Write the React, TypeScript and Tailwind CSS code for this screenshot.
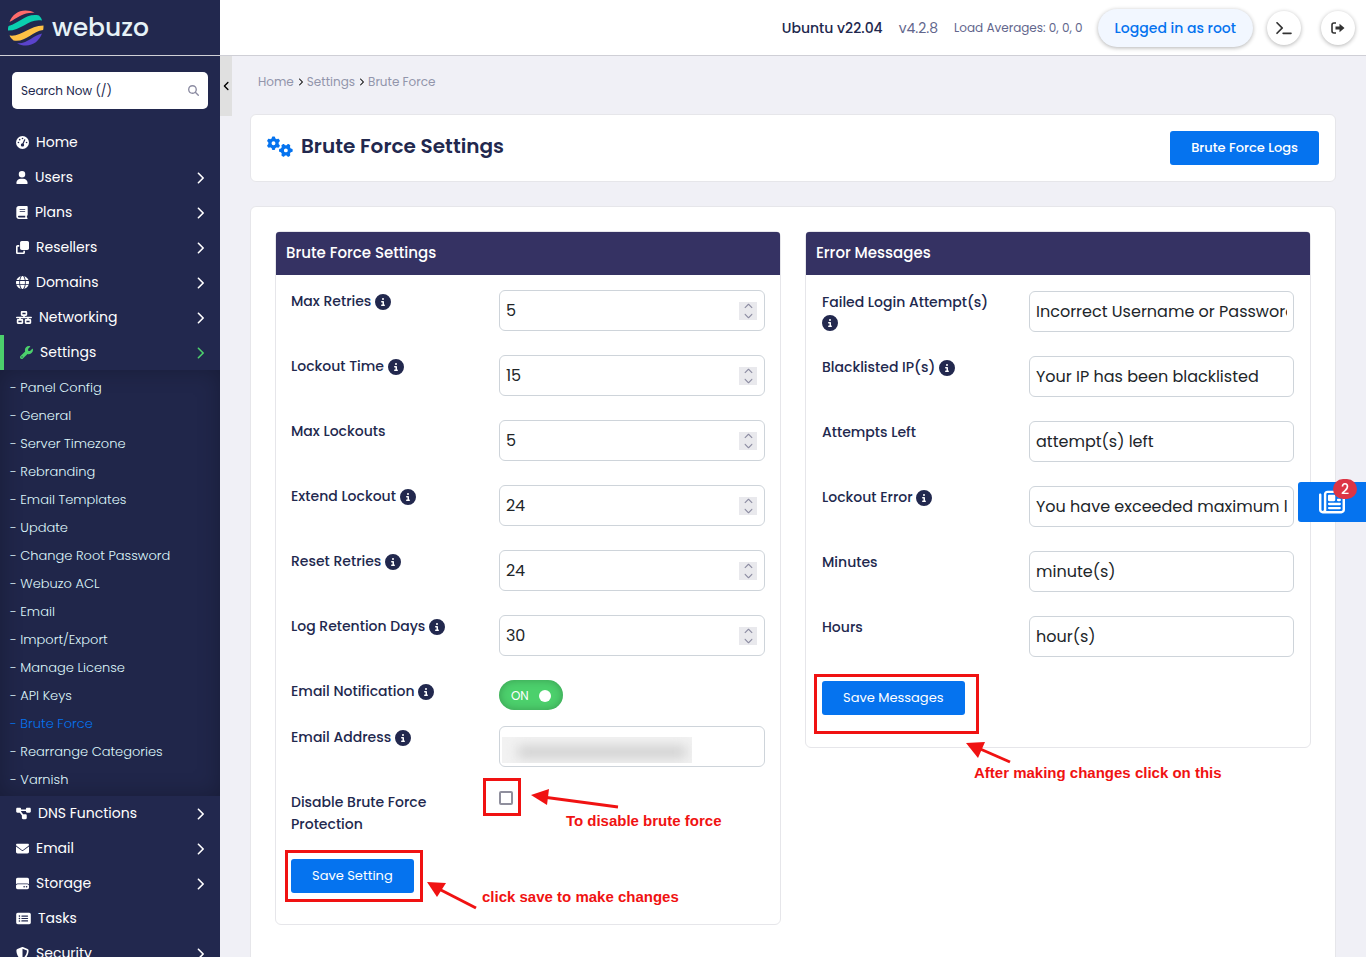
import React, { useState } from "react";
import {
  FaAngleLeft,
  FaBook,
  FaChevronDown,
  FaChevronRight,
  FaChevronUp,
  FaCircleInfo,
  FaClone,
  FaDiagramProject,
  FaEnvelope,
  FaGaugeHigh,
  FaGears,
  FaGlobe,
  FaHardDrive,
  FaMagnifyingGlass,
  FaNetworkWired,
  FaRectangleList,
  FaRegNewspaper,
  FaShieldHalved,
  FaTerminal,
  FaUser,
  FaWrench,
} from "react-icons/fa6";
import type { IconType } from "react-icons";

interface MenuItem {
  label: string;
  icon: IconType;
  iconWidth: string;
  expandable?: boolean;
  active?: boolean;
}

const topMenu: MenuItem[] = [
  { label: "Home", icon: FaGaugeHigh, iconWidth: "w-[13px]" },
  { label: "Users", icon: FaUser, iconWidth: "w-3", expandable: true },
  { label: "Plans", icon: FaBook, iconWidth: "w-3", expandable: true },
  {
    label: "Resellers",
    icon: FaClone,
    iconWidth: "w-[13px]",
    expandable: true,
  },
  { label: "Domains", icon: FaGlobe, iconWidth: "w-[13px]", expandable: true },
  {
    label: "Networking",
    icon: FaNetworkWired,
    iconWidth: "w-4",
    expandable: true,
  },
  {
    label: "Settings",
    icon: FaWrench,
    iconWidth: "w-[13px]",
    expandable: true,
    active: true,
  },
];

const bottomMenu: MenuItem[] = [
  {
    label: "DNS Functions",
    icon: FaDiagramProject,
    iconWidth: "w-[15px]",
    expandable: true,
  },
  { label: "Email", icon: FaEnvelope, iconWidth: "w-[13px]", expandable: true },
  {
    label: "Storage",
    icon: FaHardDrive,
    iconWidth: "w-[13px]",
    expandable: true,
  },
  { label: "Tasks", icon: FaRectangleList, iconWidth: "w-[15px]" },
  {
    label: "Security",
    icon: FaShieldHalved,
    iconWidth: "w-[13px]",
    expandable: true,
  },
];

const settingsMenu = [
  "Panel Config",
  "General",
  "Server Timezone",
  "Rebranding",
  "Email Templates",
  "Update",
  "Change Root Password",
  "Webuzo ACL",
  "Email",
  "Import/Export",
  "Manage License",
  "API Keys",
  "Brute Force",
  "Rearrange Categories",
  "Varnish",
];

const limitFields = [
  { id: "max_retries", label: "Max Retries", value: 5, info: true },
  { id: "lockout_time", label: "Lockout Time", value: 15, info: true },
  { id: "max_lockouts", label: "Max Lockouts", value: 5, info: false },
  { id: "extend_lockout", label: "Extend Lockout", value: 24, info: true },
  { id: "reset_retries", label: "Reset Retries", value: 24, info: true },
  { id: "log_days", label: "Log Retention Days", value: 30, info: true },
];

const messageFields = [
  {
    id: "failed_login",
    label: "Failed Login Attempt(s)",
    value: "Incorrect Username or Password",
    info: true,
  },
  {
    id: "blacklisted",
    label: "Blacklisted IP(s)",
    value: "Your IP has been blacklisted",
    info: true,
  },
  {
    id: "attempts_left",
    label: "Attempts Left",
    value: "attempt(s) left",
    info: false,
  },
  {
    id: "lockout_error",
    label: "Lockout Error",
    value: "You have exceeded maximum login retries",
    info: true,
  },
  { id: "minutes", label: "Minutes", value: "minute(s)", info: false },
  { id: "hours", label: "Hours", value: "hour(s)", info: false },
];

const inputClass =
  "h-[41px] w-full rounded-md border border-[#ced4da] bg-white px-[6px] text-[16px] text-[#212529] outline-none";
const primaryButton =
  "h-[34px] rounded-[3px] bg-[#0573ef] px-[21px] text-[13px] text-white";

const Logo = () => (
  <a href="#home" className="flex h-[55px] shrink-0 items-center gap-2 pl-2">
    <svg viewBox="0 0 36 36" className="size-9" aria-hidden="true">
      <path
        d="M1.5 12C4 5 10 0.5 17.5 0.5c3.5 0 6.500 0.800 9 2.300C16 2 10 7.500 1.500 12z"
        fill="#ff6b6b"
      />
      <path
        d="M0 20.500c0-2 0-3.300 0.600-4.500C12 13 18 3 31 5.500c1.500 1.500 2.500 3 3 5C21 8 14 20.500 0 20.500z"
        fill="#0acfaf"
      />
      <path
        d="M1.500 25.500C14 27 20 16 35.500 15.500c0 1.800 0 3-0.400 4.500C24 21.500 17 33 5.500 30.500c-1.700-1.500-3-3-4-5z"
        fill="#ffc145"
      />
      <path
        d="M9 33.200c11 0.800 16-8 25-9.700C31.500 30.500 25.500 35.500 18 35.500c-3.500 0-6.500-0.800-9-2.300z"
        fill="#5a43cc"
      />
    </svg>
    <span className="text-[25px] leading-8 font-medium text-[#e6f2f7]">
      webuzo
    </span>
  </a>
);

const LogoutIcon = () => (
  <svg viewBox="0 0 14 12" className="h-3 w-[14px]" aria-hidden="true">
    <path
      d="M5 1H3a2 2 0 0 0-2 2v6a2 2 0 0 0 2 2h2"
      fill="none"
      stroke="currentColor"
      strokeWidth="1.600"
    />
    <path d="M4.500 4.500H8.500V1.800L13.500 6l-5 4.200V7.500H4.500z" fill="currentColor" />
  </svg>
);

const MenuLink = ({ item }: { item: MenuItem }) => {
  const Icon = item.icon;
  return (
    <a
      href="#menu"
      className={`flex h-[35px] items-center gap-[7px] pr-4 pl-4 text-[14px] text-white ${
        item.active ? "border-l-4 border-[#4cd06c]" : ""
      }`}
    >
      <Icon
        className={`h-[13px] shrink-0 ${item.iconWidth} ${
          item.active ? "text-[#4cd06c]" : ""
        }`}
      />
      <span className="flex-1">{item.label}</span>
      {item.expandable && (
        <FaChevronRight
          className={`h-[14px] w-2 ${item.active ? "text-[#4cd06c]" : ""}`}
        />
      )}
    </a>
  );
};

const Sidebar = () => (
  <aside className="flex w-[220px] shrink-0 flex-col bg-[#22284e]">
    <Logo />
    <div className="flex-1 overflow-y-auto border-t border-[#d0d0d6] [scrollbar-width:none]">
      <div className="mx-3 my-4 flex h-[37px] items-center rounded-[5px] bg-white px-[9px]">
        <input
          type="text"
          aria-label="Search"
          placeholder="Search Now (/)"
          className="min-w-0 flex-1 text-[12px] text-[#22284e] outline-none placeholder:text-[#22284e]"
        />
        <FaMagnifyingGlass className="size-[11px] text-[#8c8ca2]" />
      </div>
      <nav>
        {topMenu.map((item) => (
          <MenuLink key={item.label} item={item} />
        ))}
        <ul className="bg-[#20264a] pt-1 pb-[2px] shadow-[inset_0_0_22px_rgba(0,0,0,0.25)]">
          {settingsMenu.map((name) => (
            <li key={name}>
              <a
                href="#settings"
                className={`flex h-7 items-center pl-[10px] text-[13px] font-light ${
                  name === "Brute Force" ? "text-[#0573ef]" : "text-[#dff6fa]"
                }`}
              >
                - {name}
              </a>
            </li>
          ))}
        </ul>
        {bottomMenu.map((item) => (
          <MenuLink key={item.label} item={item} />
        ))}
      </nav>
    </div>
  </aside>
);

const Header = () => (
  <header className="flex h-14 shrink-0 items-center justify-end border-b border-[#cfcfd6] bg-white pt-px pr-[11px] text-[#62668c]">
    <span className="mr-4 text-[14px] font-medium text-[#22284e]">
      Ubuntu v22.04
    </span>
    <span className="mr-4 text-[14px]">v4.2.8</span>
    <span className="mr-[15px] text-[12px]">Load Averages: 0, 0, 0</span>
    <button className="mr-[14px] h-[38px] rounded-full bg-[#f2f7ff] px-[17px] text-[14px] font-medium text-[#0573ef] shadow-[0_1px_4px_rgba(0,0,0,0.3)]">
      Logged in as root
    </button>
    <button
      aria-label="Terminal"
      className="mr-5 flex size-[34px] items-center justify-center rounded-full text-[#333] shadow-[0_1px_4px_rgba(0,0,0,0.3)]"
    >
      <FaTerminal className="h-[14px] w-4" />
    </button>
    <button
      aria-label="Logout"
      className="flex size-[34px] items-center justify-center rounded-full text-[#333] shadow-[0_1px_4px_rgba(0,0,0,0.3)]"
    >
      <LogoutIcon />
    </button>
  </header>
);

const Label = ({
  id,
  text,
  info,
}: {
  id: string;
  text: string;
  info?: boolean;
}) => (
  <label
    htmlFor={id}
    className={`pr-6 text-[14px] font-medium text-[#22284e] ${
      info ? "pt-px leading-5" : "leading-[22px]"
    }`}
  >
    {text}
    {info && (
      <>
        {" "}
        <FaCircleInfo className="inline size-4 align-[-4px]" />
      </>
    )}
  </label>
);

const Row = ({ children }: { children: React.ReactNode }) => (
  <div className="grid grid-cols-[25fr_32fr] items-start">{children}</div>
);

const NumberField = ({ id, initial }: { id: string; initial: number }) => {
  const [value, setValue] = useState(initial);
  return (
    <div className="relative">
      <input
        id={id}
        type="number"
        value={value}
        onChange={(e) => setValue(Number(e.target.value))}
        className={`${inputClass} [appearance:textfield] [&::-webkit-inner-spin-button]:appearance-none`}
      />
      <div className="absolute top-3 right-2 flex h-[18px] w-[18px] flex-col bg-[#e9e9ed] text-[#8c8ca2]">
        <button
          type="button"
          aria-label="Increase"
          className="flex flex-1 items-center justify-center"
          onClick={() => setValue(value + 1)}
        >
          <FaChevronUp className="size-[9px]" />
        </button>
        <button
          type="button"
          aria-label="Decrease"
          className="flex flex-1 items-center justify-center"
          onClick={() => setValue(value - 1)}
        >
          <FaChevronDown className="size-[9px]" />
        </button>
      </div>
    </div>
  );
};

const Panel = ({
  title,
  children,
}: {
  title: string;
  children: React.ReactNode;
}) => (
  <section className="min-w-0 flex-1 rounded-md border border-[#e6e6ea]">
    <h2 className="flex h-[43px] items-center rounded-t-[3px] bg-[#353263] px-[10px] text-[15px] font-medium text-white">
      {title}
    </h2>
    {children}
  </section>
);

const Arrow = ({
  className,
  line,
  head,
}: {
  className: string;
  line: string;
  head: string;
}) => (
  <svg className={`absolute ${className}`} aria-hidden="true">
    <path d={line} stroke="#f01212" strokeWidth="3" fill="none" />
    <path d={head} fill="#f01212" />
  </svg>
);

const Note = ({
  className,
  children,
}: {
  className: string;
  children: string;
}) => (
  <span
    className={`absolute font-['Liberation_Sans',sans-serif] text-[15px] leading-5 font-bold whitespace-nowrap text-[#f01212] ${className}`}
  >
    {children}
  </span>
);

const SettingsForm = () => {
  const [notify, setNotify] = useState(true);
  const [disabled, setDisabled] = useState(false);

  return (
    <form
      className="flex flex-col gap-6 px-[15px] pt-[15px] pb-[31px]"
      onSubmit={(e) => e.preventDefault()}
    >
      {limitFields.map((field) => (
        <Row key={field.id}>
          <Label id={field.id} text={field.label} info={field.info} />
          <NumberField id={field.id} initial={field.value} />
        </Row>
      ))}
      <div className="flex flex-col gap-4">
        <Row>
          <Label id="notify" text="Email Notification" info />
          <div className="relative h-[30px] w-16">
            <input
              id="notify"
              type="checkbox"
              role="switch"
              checked={notify}
              onChange={(e) => setNotify(e.target.checked)}
              className="block h-full w-full appearance-none rounded-full bg-gray-400 shadow-[inset_0_0_8px_rgba(0,0,0,0.25)] checked:bg-[#4cd06c]"
            />
            <span className="pointer-events-none absolute inset-0 flex items-center justify-between px-3 pt-px text-[12px] text-white">
              {notify ? "ON" : "OFF"}
              <span className="size-3 rounded-full bg-white" />
            </span>
          </div>
        </Row>
        <Row>
          <Label id="email" text="Email Address" info />
          <div className="relative">
            <input id="email" type="email" className={inputClass} />
            {/* hidden address */}
            <div className="pointer-events-none absolute top-[11px] left-[3px] h-[26px] w-[190px] overflow-hidden bg-[#f2f2f2]">
              <div className="mt-[9px] ml-4 h-3 w-[168px] bg-[#cfcfcf] blur-[6px]" />
            </div>
          </div>
        </Row>
      </div>
      <Row>
        <Label id="disable" text="Disable Brute Force Protection" />
        <div className="relative">
          <input
            id="disable"
            type="checkbox"
            checked={disabled}
            onChange={(e) => setDisabled(e.target.checked)}
            className="block size-[14px] appearance-none rounded-[2px] border-2 border-[#8f8f9d] bg-white checked:bg-[#0573ef]"
          />
          <div className="pointer-events-none absolute -top-[13px] -left-4 size-[38px] border-3 border-[#f01212]" />
          <Arrow
            className="-top-1 left-8 h-6 w-[90px]"
            line="M12 10 L87 20"
            head="M0 8 L18 2 L16 18 Z"
          />
          <Note className="top-5 left-[67px]">To disable brute force</Note>
        </div>
      </Row>
      <div className="relative flex">
        <button type="submit" className={primaryButton}>
          Save Setting
        </button>
        <div className="pointer-events-none absolute -top-[9px] -left-[6px] h-[52px] w-[138px] border-3 border-[#f01212]" />
        <Arrow
          className="top-[23px] left-[136px] h-7 w-[52px]"
          line="M10 6 L49 26"
          head="M0 0 L19 1 L10 15 Z"
        />
        <Note className="top-7 left-[191px]">click save to make changes</Note>
      </div>
    </form>
  );
};

const MessagesForm = () => (
  <form
    className="flex flex-col gap-6 px-4 pt-4 pb-8"
    onSubmit={(e) => e.preventDefault()}
  >
    {messageFields.map((field) => (
      <Row key={field.id}>
        <Label id={field.id} text={field.label} info={field.info} />
        <input
          id={field.id}
          type="text"
          defaultValue={field.value}
          className={inputClass}
        />
      </Row>
    ))}
    <div className="relative flex">
      <button type="submit" className={primaryButton}>
        Save Messages
      </button>
      <div className="pointer-events-none absolute -top-[7px] -left-2 h-[60px] w-[165px] border-3 border-[#f01212]" />
      <Arrow
        className="top-[61px] left-[144px] h-6 w-[48px]"
        line="M12 6 L44 20"
        head="M0 1 L19 0 L12 16 Z"
      />
      <Note className="top-[82px] left-[152px]">
        After making changes click on this
      </Note>
    </div>
  </form>
);

export default function App() {
  return (
    <div className="flex h-screen overflow-hidden bg-[#f0f0f6] font-['Poppins','Inter',sans-serif]">
      <Sidebar />
      <div className="flex min-w-0 flex-1 flex-col">
        <Header />
        <main className="relative flex-1 overflow-y-auto px-[30px] [scrollbar-width:none]">
          <button
            aria-label="Collapse sidebar"
            className="absolute top-0 left-0 flex h-[60px] w-3 items-center justify-center bg-[#e0e0e0] text-black"
          >
            <FaAngleLeft className="h-3 w-[7px]" />
          </button>
          <nav
            aria-label="Breadcrumb"
            className="flex h-[58px] items-center gap-1 pb-[6px] pl-2 text-[12px] text-[#9295ab]"
          >
            <a href="#home">Home</a>
            <FaChevronRight className="h-2 w-[5px] text-black" />
            <a href="#settings">Settings</a>
            <FaChevronRight className="h-2 w-[5px] text-black" />
            <a href="#brute-force">Brute Force</a>
          </nav>

          <div className="flex h-[68px] items-center rounded-md border border-[#e6e6ea] bg-white px-4">
            <FaGears className="mr-2 mb-1 h-[21px] w-[26px] text-[#0573ef]" />
            <h1 className="flex-1 pb-1 text-[20px] font-semibold text-[#22284e]">
              Brute Force Settings
            </h1>
            <button className={`${primaryButton} font-medium`}>
              Brute Force Logs
            </button>
          </div>

          <div className="mt-6 flex items-start gap-6 rounded-t-md border border-[#e6e6ea] bg-white p-6 pb-12">
            <Panel title="Brute Force Settings">
              <SettingsForm />
            </Panel>
            <Panel title="Error Messages">
              <MessagesForm />
            </Panel>
          </div>
        </main>
      </div>

      <button
        aria-label="News"
        className="fixed top-[482px] right-0 flex h-10 w-[68px] items-center justify-center rounded-l-[3px] bg-[#0573ef] text-white"
      >
        <FaRegNewspaper className="size-[26px]" />
        <span className="absolute -top-[3px] right-[9px] flex h-5 w-6 items-center justify-center rounded-full bg-[#dc3545] text-[14px] font-medium">
          2
        </span>
      </button>
    </div>
  );
}
